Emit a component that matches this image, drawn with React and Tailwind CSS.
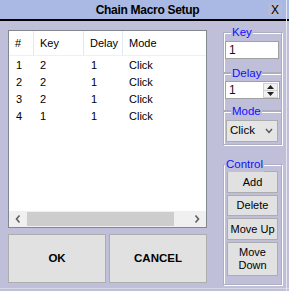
import React from "react";

const rows = [
  { n: 1, key: 2, delay: 1, mode: "Click" },
  { n: 2, key: 2, delay: 1, mode: "Click" },
  { n: 3, key: 2, delay: 1, mode: "Click" },
  { n: 4, key: 1, delay: 1, mode: "Click" },
];

function Group({ label, className = "", labelClass = "left-[7px]", children }) {
  return (
    <div
      className={`relative border border-[#adadc0] shadow-[inset_1px_1px_0_#ffffff,1px_1px_0_#ffffff] ${className}`}
    >
      <span
        className={`absolute top-[-9px] ${labelClass} bg-[#bfbfd9] px-[1px] text-[11.5px] leading-[16px] text-[#1010ff]`}
      >
        {label}
      </span>
      {children}
    </div>
  );
}

function SideButton({ children, className = "" }) {
  return (
    <button
      className={`flex w-[51px] items-center justify-center border border-[#adadad] bg-[#e1e1e1] text-center text-[11px] leading-[13px] text-black ${className}`}
    >
      {children}
    </button>
  );
}

export default function App() {
  return (
    <div className="relative h-[291px] w-[289px] overflow-hidden bg-[#bfbfd9] font-['Liberation_Sans',Arial,sans-serif] text-black">
      {/* title bar */}
      <div className="relative flex h-[19px] items-center justify-center bg-[#a9b9e3] pl-[6px]">
        <span className="text-[12px] font-bold tracking-[-0.3px]">Chain Macro Setup</span>
        <span className="absolute right-[7px] top-[3px] flex h-[13px] w-[14px] items-center justify-center bg-[#b3bbd9] text-[12px] leading-none">
          X
        </span>
      </div>
      <div className="h-[2px] bg-black" />

      <div className="flex pl-[8px] pt-[9px]">
        {/* left column */}
        <div className="flex w-[199px] flex-col">
          <div className="flex h-[198px] flex-col border border-[#828790] bg-white">
            <div className="flex h-[25px] items-center border-b border-[#eef0f4] text-[11px]">
              <div className="flex h-full w-[25px] items-center border-r border-[#e3e9f3] pl-[6px]">#</div>
              <div className="flex h-full w-[50px] items-center border-r border-[#e3e9f3] pl-[6px]">Key</div>
              <div className="flex h-full w-[39px] items-center border-r border-[#e3e9f3] pl-[6px]">Delay</div>
              <div className="flex h-full items-center pl-[6px]">Mode</div>
            </div>
            <div className="flex-1 pt-[1px] text-[11px]">
              {rows.map((r) => (
                <div key={r.n} className="flex h-[17px] items-center">
                  <div className="w-[25px] pl-[7px]">{r.n}</div>
                  <div className="w-[50px] pl-[6px]">{r.key}</div>
                  <div className="w-[39px] pl-[7px]">{r.delay}</div>
                  <div className="pl-[6px]">{r.mode}</div>
                </div>
              ))}
            </div>
            {/* horizontal scrollbar */}
            <div className="flex h-[16px] items-stretch bg-[#f0f0f0]">
              <div className="flex w-[18px] items-center justify-center">
                <svg width="6" height="8" viewBox="0 0 6 8">
                  <path d="M4.5 0.5 L1.5 4 L4.5 7.5" fill="none" stroke="#606060" strokeWidth="1.6" />
                </svg>
              </div>
              <div className="my-[1px] w-[147px] bg-[#cdcdcd]" />
              <div className="flex-1" />
              <div className="flex w-[18px] items-center justify-center">
                <svg width="6" height="8" viewBox="0 0 6 8">
                  <path d="M1.5 0.5 L4.5 4 L1.5 7.5" fill="none" stroke="#606060" strokeWidth="1.6" />
                </svg>
              </div>
            </div>
          </div>
          <div className="mt-[6px] flex h-[49px] gap-[3px]">
            <button className="flex-1 border border-[#adadad] bg-[#e1e1e1] text-[11.5px] font-bold">OK</button>
            <button className="flex-1 border border-[#adadad] bg-[#e1e1e1] text-[11.5px] font-bold">CANCEL</button>
          </div>
        </div>

        {/* right column */}
        <div className="ml-[16px] mt-[2px] flex w-[59px] flex-col">
          <Group label="Key" className="h-[41px] px-[1px] pt-[8px]">
            <div className="flex h-[18px] w-[54px] items-center border border-[#a0a0a0] bg-white pl-[3px] text-[12px] text-[#2a0a1a]">
              1
            </div>
          </Group>
          <Group label="Delay" className="h-[38px] px-[1px] pt-[7px]">
            <div className="flex h-[18px] w-[55px] items-center border border-[#a0a0a0] bg-white pl-[3px] text-[12px] text-[#2a0a1a]">
              <span className="flex-1">1</span>
              <div className="mr-[1px] flex h-[15px] w-[15px] flex-col border border-[#d0d0d0] bg-[#f0f0f0]">
                <div className="flex flex-1 items-center justify-center border-b border-[#d0d0d0]">
                  <svg width="7" height="4" viewBox="0 0 7 4">
                    <path d="M0 4 L3.5 0 L7 4 Z" fill="#222" />
                  </svg>
                </div>
                <div className="flex flex-1 items-center justify-center">
                  <svg width="7" height="4" viewBox="0 0 7 4">
                    <path d="M0 0 L3.5 4 L7 0 Z" fill="#222" />
                  </svg>
                </div>
              </div>
            </div>
          </Group>
          <Group label="Mode" className="h-[34px] px-[2px] pt-[8px]">
            <div className="flex h-[22px] w-[52px] items-center border border-[#acacac] bg-[#e5e5e5] pl-[3px] text-[11.5px]">
              <span className="flex-1">Click</span>
              <svg width="8" height="6" viewBox="0 0 8 6" className="mr-[4px]">
                <path d="M1 1 L4 4.5 L7 1" fill="none" stroke="#555" strokeWidth="1.4" />
              </svg>
            </div>
          </Group>

          <Group label="Control" labelClass="left-[1px]" className="mt-[19px] flex h-[121px] flex-col gap-[2px] px-[3px] pt-[6px]">
            <SideButton className="h-[22px]">Add</SideButton>
            <SideButton className="h-[21px]">Delete</SideButton>
            <SideButton className="h-[22px]">Move Up</SideButton>
            <SideButton className="h-[34px]">
              Move
              <br />
              Down
            </SideButton>
          </Group>
        </div>
      </div>

      {/* bits of the window behind */}
      <div className="absolute bottom-0 left-0 h-[3px] w-full border-t border-[#d8d8e4]" />
      <div className="absolute right-0 top-0 h-full w-[3px] border-l border-[#e6e6f0]" />
    </div>
  );
}
